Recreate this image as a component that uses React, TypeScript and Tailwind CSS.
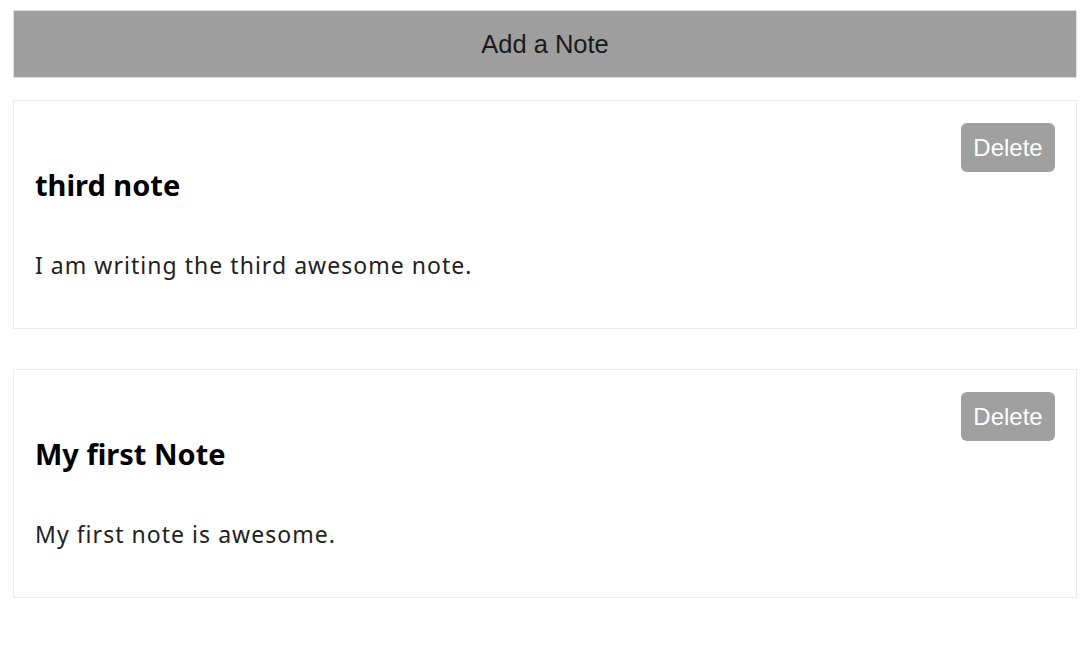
const notes = [
  { id: 3, title: "third note", body: "I am writing the third awesome note." },
  { id: 1, title: "My first Note", body: "My first note is awesome." },
];

function Note({ title, body }: { title: string; body: string }) {
  return (
    <div className="border border-[#ececec] bg-white px-[21px] pt-[22px] pb-[49px] flow-root">
      <button className="float-right h-[49px] w-[94px] rounded-[6px] bg-[#a0a0a0] text-[24px] text-white font-['Liberation_Sans',Arial,sans-serif]">
        Delete
      </button>
      <h2 className="pt-[47px] text-[29px] leading-[30px] font-bold text-black">{title}</h2>
      <p className="mt-[52px] text-[23px] leading-[27px] tracking-[0.045em] text-[#222]">{body}</p>
    </div>
  );
}

export default function App() {
  return (
    <div className="min-h-[648px] bg-white pl-[13px] pr-[11px] pt-[10px] font-['Noto_Sans',sans-serif]">
      <button className="flex h-[68px] w-full items-center justify-center border border-[#e0e0e0] bg-[#9e9e9e] text-[25.5px] text-[#1a1a1a] font-['Liberation_Sans',Arial,sans-serif]">
        Add a Note
      </button>

      {/* notes list */}
      <div className="mt-[22px] flex flex-col gap-[40px]">
        {notes.map((n) => (
          <Note key={n.id} title={n.title} body={n.body} />
        ))}
      </div>
    </div>
  );
}
